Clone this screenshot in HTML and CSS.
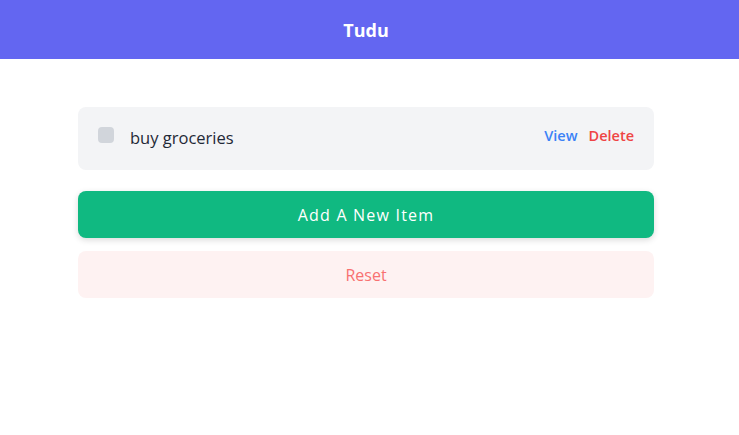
FILE: index.html
```html
<!DOCTYPE html>
<html>
<head>
<meta charset="utf-8">
<link rel="stylesheet" href="styles.css">
</head>
<body>
<div class="page">
  <header class="topbar"><h1 class="title">Tudu</h1></header>
  <main class="content">
    <div class="item">
      <span class="check"></span>
      <span class="label">buy groceries</span>
      <span class="actions"><a class="view">View</a><a class="delete">Delete</a></span>
    </div>
    <button class="add">Add A New Item</button>
    <button class="reset">Reset</button>
  </main>
</div>
</body>
</html>
```
FILE: styles.css
```css
* { box-sizing: border-box; }
html, body { margin: 0; padding: 0; background: #fff; }
body { font-family: "Open Sans", "Liberation Sans", sans-serif; }
.page { width: 100%; }
.topbar { background: #6366f1; height: 59px; display: flex; align-items: center; justify-content: center; padding-right: 7px; }
.title { margin: 0; color: #fff; font-size: 18px; font-weight: 700; }
.content { width: 576px; margin: 48px 0 0 78px; display: flex; flex-direction: column; }
.item { background: #f3f4f6; border-radius: 8px; height: 63px; display: flex; align-items: center; padding: 0 20px; }
.check { width: 16px; height: 16px; background: #d1d5db; border-radius: 4px; margin-top: -7px; }
.label { margin-left: 16px; font-size: 16.5px; color: #1f2937; flex: 1; margin-top: -2px; }
.actions { display: flex; gap: 11px; margin-top: -6px; font-size: 14.5px; font-weight: 600; }
.view { color: #3b82f6; }
.delete { color: #ef4444; }
.add { margin-top: 21px; height: 47px; border: 0; border-radius: 8px; background: #10b981; color: #fff; font-family: inherit; font-size: 16px; font-weight: 500; letter-spacing: 1.2px; box-shadow: 0 2px 6px rgba(0,0,0,0.15); }
.reset { margin-top: 13px; height: 47px; border: 0; border-radius: 8px; background: #fef2f2; color: #f87171; font-family: inherit; font-size: 16px; }
```
